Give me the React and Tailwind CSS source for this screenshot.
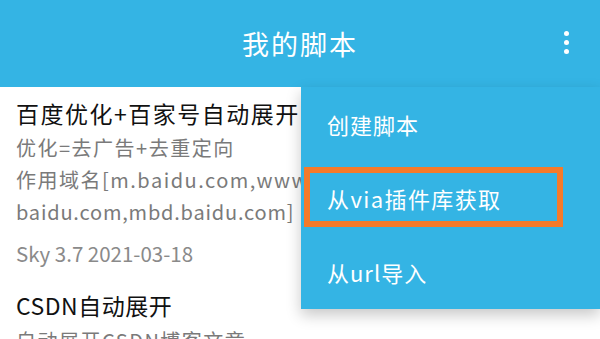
import React from "react";

const F = { fontFamily: '"Noto Sans CJK SC", "Noto Sans", sans-serif' };

export default function App() {
  return (
    <div className="relative w-[600px] h-[339px] overflow-hidden bg-white" style={F}>
      <header className="relative h-[87px] bg-[#34b4e4] flex items-center justify-center">
        <h1 className="text-white text-[27px] leading-none tracking-[2px] font-normal">我的脚本</h1>
        <div className="absolute right-[31px] top-[31px] flex flex-col gap-[4px]">
          <span className="block w-[5px] h-[5px] rounded-full bg-white" />
          <span className="block w-[5px] h-[5px] rounded-full bg-white" />
          <span className="block w-[5px] h-[5px] rounded-full bg-white" />
        </div>
      </header>

      <main className="pl-4 pt-[10px] whitespace-nowrap">
        <div className="text-[23px] leading-[32px] tracking-[1.5px] text-[#111]">百度优化+百家号自动展开</div>
        <div className="mt-[3px] text-[20px] leading-[32px] tracking-[1.5px] text-[#7a7a7a]">
          <div>优化=去广告+去重定向</div>
          <div>作用域名[m.baidu.com,www.</div>
          <div className="tracking-[0.8px]">baidu.com,mbd.baidu.com]</div>
        </div>
        <div className="mt-[11px] text-[20.5px] leading-[28px] text-[#8a8a8a]">Sky 3.7 2021-03-18</div>
        <div className="mt-[22px] text-[23px] leading-[32px] tracking-[0.5px] text-[#111]">CSDN自动展开</div>
        <div className="mt-[4px] text-[20px] leading-[32px] tracking-[1.5px] text-[#7a7a7a]">自动展开CSDN博客文章</div>
      </main>

      <div className="absolute right-0 top-[87px] w-[299px] bg-[#34b4e4] shadow-[0_6px_14px_rgba(0,0,0,0.22)]">
        <div className="h-[74px] flex items-center pl-[26px] text-white text-[22px] tracking-[1px]">创建脚本</div>
        <div className="h-[74px] flex items-center pl-[26px] text-white text-[22px] tracking-[1.4px]">从via插件库获取</div>
        <div className="h-[74px] flex items-center pl-[26px] text-white text-[22px] tracking-[1px]">从url导入</div>
        <div className="absolute left-[3px] top-[80px] w-[259px] h-[60px] border-[6px] border-[#f47a2a]" />
      </div>
    </div>
  );
}
